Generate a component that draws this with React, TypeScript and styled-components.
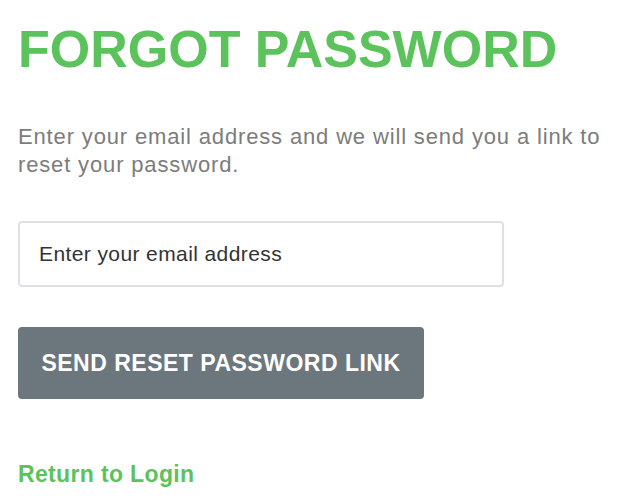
import React from "react";
import styled, { createGlobalStyle } from "styled-components";

const GlobalStyle = createGlobalStyle`
  html, body {
    margin: 0;
    padding: 0;
    background: #ffffff;
  }
  body {
    font-family: "Liberation Sans", Arial, Helvetica, sans-serif;
  }
  * { box-sizing: border-box; }
`;

const Page = styled.main`
  display: flex;
  flex-direction: column;
  align-items: flex-start;
  padding: 19px 18px 0 18px;
`;

const Title = styled.h1`
  margin: 0;
  font-size: 52px;
  font-weight: 700;
  line-height: 60px;
  color: #5cc35c;
`;

const Intro = styled.p`
  margin: 44px 0 0 0;
  font-size: 22px;
  line-height: 28px;
  letter-spacing: 0.85px;
  color: #7c7c7c;
  max-width: 604px;
`;

const EmailInput = styled.input`
  margin-top: 42px;
  width: 486px;
  height: 66px;
  padding: 0 19px;
  border: 2px solid #dde0ea;
  border-radius: 4px;
  font-family: "Liberation Sans", Arial, Helvetica, sans-serif;
  font-size: 21px;
  letter-spacing: 0.4px;
  color: #333333;
  outline: none;
  &::placeholder {
    color: #333333;
    opacity: 1;
  }
`;

const SubmitButton = styled.button`
  margin-top: 40px;
  height: 72px;
  width: 406px;
  padding: 0;
  border: none;
  border-radius: 4px;
  background: #6c767d;
  color: #ffffff;
  font-family: "Liberation Sans", Arial, Helvetica, sans-serif;
  font-size: 23px;
  font-weight: 700;
  letter-spacing: 0.5px;
  text-transform: uppercase;
  cursor: pointer;
`;

const BackLink = styled.a`
  margin-top: 62px;
  font-size: 23px;
  font-weight: 700;
  line-height: 26px;
  letter-spacing: 0.35px;
  color: #5cc35c;
  text-decoration: none;
`;

export default function App() {
  return (
    <>
      <GlobalStyle />
      <Page>
        <Title>FORGOT PASSWORD</Title>
        <Intro>
          Enter your email address and we will send you a link to reset your
          password.
        </Intro>
        <EmailInput type="email" placeholder="Enter your email address" />
        <SubmitButton type="button">Send Reset Password Link</SubmitButton>
        <BackLink href="#">Return to Login</BackLink>
      </Page>
    </>
  );
}
